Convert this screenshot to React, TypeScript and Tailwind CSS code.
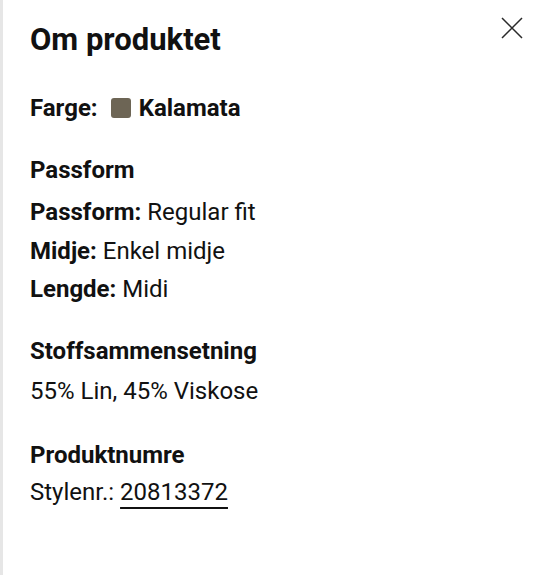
import React from 'react';

const fit = [
  { label: 'Passform:', value: 'Regular fit' },
  { label: 'Midje:', value: 'Enkel midje' },
  { label: 'Lengde:', value: 'Midi' },
];

export default function App() {
  return (
    <div className="min-h-[575px] w-[537px] bg-white border-l-[3px] border-[#e6e6e6] font-['Roboto',sans-serif] text-[#111]">
      <div className="flex items-start justify-between pl-[27px] pr-[10px] pt-[22px]">
        <h2 className="text-[31px] font-bold leading-[36px]">Om produktet</h2>
        <button className="mt-[-9px] p-1" aria-label="Lukk">
          <svg width="22" height="22" viewBox="0 0 22 22" fill="none" stroke="#2a2a2a" strokeWidth="1.5">
            <path d="M1 1l20 20M21 1L1 21" />
          </svg>
        </button>
      </div>

      <div className="pl-[27px] text-[24px] leading-[30px]">
        <div className="mt-[35px] flex items-center font-bold">
          <span>Farge:</span>
          <span className="ml-[13px] mr-[8px] inline-block h-[20px] w-[20px] rounded-[3px] bg-[#6d6555]" />
          <span>Kalamata</span>
        </div>

        <h3 className="mt-[32px] font-bold">Passform</h3>
        <ul className="mt-[12px] flex flex-col gap-[8.5px]">
          {fit.map((f) => (
            <li key={f.label}>
              <span className="font-bold">{f.label}</span> {f.value}
            </li>
          ))}
        </ul>

        <h3 className="mt-[32px] font-bold">Stoffsammensetning</h3>
        <p className="mt-[10px]">55% Lin, 45% Viskose</p>

        <h3 className="mt-[34px] font-bold">Produktnumre</h3>
        <p className="mt-[7px]">
          Stylenr.:{' '}
          <span className="underline decoration-[2px] underline-offset-[7px]">20813372</span>
        </p>
      </div>
    </div>
  );
}
